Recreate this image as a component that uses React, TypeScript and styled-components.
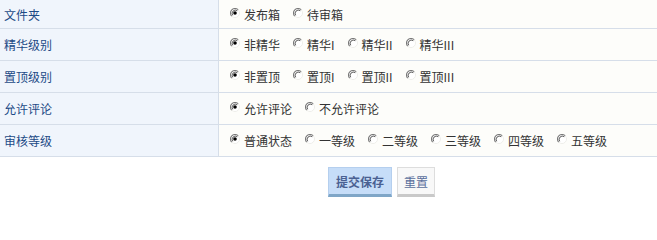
import React from 'react';
import styled, { createGlobalStyle } from 'styled-components';

const GlobalStyle = createGlobalStyle`
  html, body {
    margin: 0;
    padding: 0;
    background: #ffffff;
  }
  body {
    font-family: "Noto Sans CJK SC", "Liberation Sans", sans-serif;
    font-size: 12px;
    color: #333333;
  }
`;

type Field = {
  label: string;
  options: string[];
};

const fields: Field[] = [
  { label: '文件夹', options: ['发布箱', '待审箱'] },
  { label: '精华级别', options: ['非精华', '精华I', '精华II', '精华III'] },
  { label: '置顶级别', options: ['非置顶', '置顶I', '置顶II', '置顶III'] },
  { label: '允许评论', options: ['允许评论', '不允许评论'] },
  { label: '审核等级', options: ['普通状态', '一等级', '二等级', '三等级', '四等级', '五等级'] },
];

const Form = styled.div`
  width: 657px;
`;

const Row = styled.div<{ $first?: boolean }>`
  display: grid;
  grid-template-columns: 219px 1fr;
  height: ${(p) => (p.$first ? '28px' : '31px')};
  border-bottom: 1px solid #d6dee9;
`;

const LabelCell = styled.div`
  display: flex;
  align-items: center;
  padding-left: 4px;
  background: #f0f5fc;
  border-right: 1px solid #d6dee9;
  color: #1c4a86;
`;

const OptionCell = styled.div`
  display: flex;
  align-items: center;
  padding-left: 11px;
  background: #fdfdfa;
`;

const Option = styled.label`
  display: inline-flex;
  align-items: center;
  margin-right: 13px;
  white-space: nowrap;
  cursor: pointer;
`;

const RadioMark = styled.svg`
  width: 10px;
  height: 10px;
  margin-right: 4px;
  margin-top: -3px;
  flex: none;
`;

const Radio = ({ checked }: { checked?: boolean }) => (
  <RadioMark viewBox="0 0 10 10">
    <circle cx="5" cy="5" r="4.5" fill="#ffffff" />
    <path d="M8.2 1.8 A4.5 4.5 0 0 0 1.8 8.2" fill="none" stroke="#7a7a7a" strokeWidth="1.1" />
    <path d="M7.3 2.7 A3.3 3.3 0 0 0 2.7 7.3" fill="none" stroke="#4a4a4a" strokeWidth="0.9" />
    <path d="M1.8 8.2 A4.5 4.5 0 0 0 8.2 1.8" fill="none" stroke="#eeeeea" strokeWidth="1" />
    {checked && <circle cx="5" cy="5" r="1.8" fill="#000000" />}
  </RadioMark>
);

const Footer = styled.div`
  display: flex;
  gap: 5px;
  padding: 10px 0 0 328px;
`;

const Button = styled.button<{ $primary?: boolean }>`
  height: 30px;
  padding: ${(p) => (p.$primary ? '0 7px' : '0 6px')};
  font-family: "Noto Sans CJK SC", "Liberation Sans", sans-serif;
  font-size: 12px;
  font-weight: ${(p) => (p.$primary ? 'bold' : 'normal')};
  color: ${(p) => (p.$primary ? '#4a6192' : '#5a6f9c')};
  background: ${(p) => (p.$primary ? '#c6ddf8' : '#f8f8f8')};
  border: 1px solid ${(p) => (p.$primary ? '#b5cfee' : '#dddddd')};
  border-bottom: 3px solid ${(p) => (p.$primary ? '#7fa6c7' : '#c9c9c9')};
  cursor: pointer;
`;

export default function App() {
  return (
    <>
      <GlobalStyle />
      <Form>
        {fields.map((f, i) => (
          <Row key={f.label} $first={i === 0}>
            <LabelCell>{f.label}</LabelCell>
            <OptionCell>
              {f.options.map((o, j) => (
                <Option key={o}>
                  <Radio checked={j === 0} />
                  {o}
                </Option>
              ))}
            </OptionCell>
          </Row>
        ))}
        <Footer>
          <Button $primary>提交保存</Button>
          <Button>重置</Button>
        </Footer>
      </Form>
    </>
  );
}
